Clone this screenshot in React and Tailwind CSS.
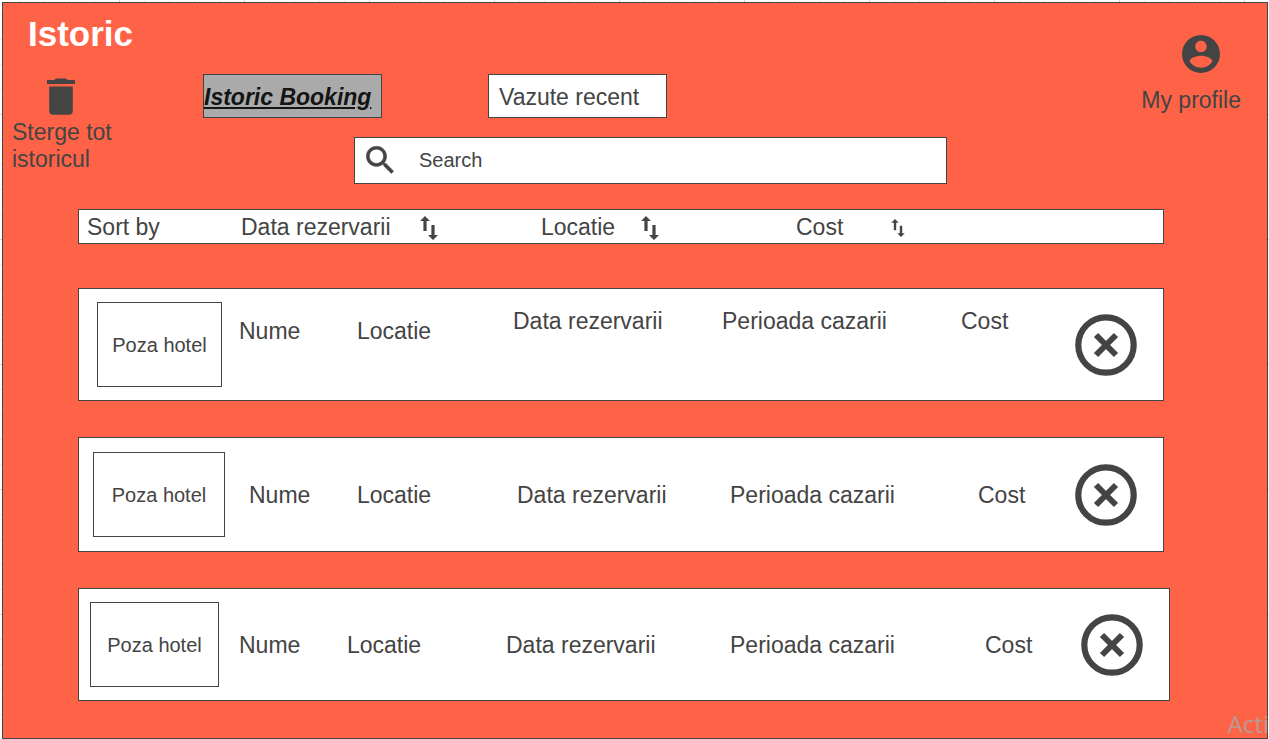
import React from "react";

function TrashIcon() {
  return (
    <svg width="28" height="37" viewBox="0 0 28 37" fill="#444" aria-hidden="true">
      <path d="M0 1.9h7.2Q8 .4 9.5 .4h9Q20 .4 20.8 1.9H28V6H0z" />
      <path d="M2.2 8.4h23.6v24.3a4 4 0 0 1-4 4H6.2a4 4 0 0 1-4-4z" />
    </svg>
  );
}

function ProfileIcon() {
  return (
    <svg width="38" height="38" viewBox="2 2 20 20" fill="#444" aria-hidden="true">
      <path d="M12 2C6.48 2 2 6.48 2 12s4.48 10 10 10 10-4.48 10-10S17.52 2 12 2zm0 3c1.66 0 3 1.34 3 3s-1.34 3-3 3-3-1.34-3-3 1.34-3 3-3zm0 14.2c-2.5 0-4.71-1.28-6-3.22.03-1.99 4-3.08 6-3.08 1.99 0 5.97 1.09 6 3.08-1.29 1.94-3.5 3.22-6 3.22z" />
    </svg>
  );
}

function SearchIcon() {
  return (
    <svg width="28" height="28" viewBox="3.3 3.5 17.9 17.9" fill="#444" stroke="#444" strokeWidth="0.3" className="shrink-0" aria-hidden="true">
      <path d="M15.5 14h-.79l-.28-.27C15.41 12.59 16 11.11 16 9.5 16 5.91 13.09 3 9.5 3S3 5.91 3 9.5 5.91 16 9.5 16c1.61 0 3.09-.59 4.23-1.57l.27.28v.79l5 4.99L20.49 19l-4.99-5zm-6 0C7.01 14 5 11.99 5 9.5S7.01 5 9.5 5 14 7.01 14 9.5 11.99 14 9.5 14z" transform="translate(.5 .6)" />
    </svg>
  );
}

function SortIcon({ className }) {
  return (
    <svg viewBox="0 0 18 24" fill="#444" className={className} aria-hidden="true">
      <path d="M5 0l5 5H6.6V15H3.4V5H0z" />
      <path d="M13 24l-5-5h3.4V9h3.2v10H18z" />
    </svg>
  );
}

function RemoveIcon() {
  return (
    <svg width="62" height="62" viewBox="0 0 62 62" fill="none" stroke="#444" aria-hidden="true">
      <circle cx="31" cy="31" r="27.7" strokeWidth="6.2" />
      <path d="M21 21l20 20M41 21L21 41" strokeWidth="6" />
    </svg>
  );
}

const sortFields = [
  { label: "Data rezervarii", button: "gap-[29px]", icon: "w-[18px] h-6" },
  { label: "Locatie", button: "gap-[26px]", icon: "w-[18px] h-6" },
  { label: "Cost", button: "gap-12", icon: "w-[14px] h-[18px]" },
];

const bookings = [
  {
    id: 1,
    row: "h-[113px] pl-[18px] mr-[103px] grid-cols-[142fr_118fr_156fr_209fr_239fr_114fr_88fr]",
    photo: "w-[125px]",
    name: "self-start pt-[29px]",
    detail: "self-start pt-[19px]",
  },
  {
    id: 2,
    row: "h-[115px] pl-[14px] mr-[103px] grid-cols-[156fr_108fr_160fr_213fr_248fr_97fr_88fr]",
    photo: "w-[132px]",
    name: "pt-0.5",
    detail: "pt-0.5",
  },
  {
    id: 3,
    row: "h-[113px] pl-[11px] mr-[97px] grid-cols-[149fr_108fr_159fr_224fr_255fr_96fr_88fr]",
    photo: "w-[129px]",
    name: "pt-0.5",
    detail: "pt-0.5",
  },
];

function Booking({ row, photo, name, detail }) {
  return (
    <li className={`grid items-center border border-[#444] bg-white whitespace-nowrap ${row}`}>
      <div className={`flex h-[85px] items-center justify-center border border-[#444] text-xl ${photo}`}>
        Poza hotel
      </div>
      <span className={name}>Nume</span>
      <span className={name}>Locatie</span>
      <span className={detail}>Data rezervarii</span>
      <span className={detail}>Perioada cazarii</span>
      <span className={detail}>Cost</span>
      <button type="button" aria-label="Sterge" className="w-[62px]">
        <RemoveIcon />
      </button>
    </li>
  );
}

export default function App() {
  return (
    <div className="relative flex min-h-screen bg-white bg-[linear-gradient(#d4d4d4_1px,transparent_1px),linear-gradient(90deg,#d4d4d4_1px,transparent_1px),linear-gradient(#ececec_1px,transparent_1px),linear-gradient(90deg,#ececec_1px,transparent_1px)] bg-[size:125px_125px,125px_125px,25px_25px,25px_25px] bg-[position:119px_114px] pt-[2px] pr-px pl-[2px] font-['Liberation_Sans',Arial,sans-serif] text-[23px] leading-[27px] text-[#444]">
      <main className="flex-1 border border-[#444] bg-[#ff6347]">
        <header className="flex">
          <div className="w-[200px] shrink-0 pt-[13px] pl-[9px]">
            <h1 className="pl-4 text-[35px] leading-9 font-bold text-white">Istoric</h1>
            <button type="button" className="mt-[26px] block w-[120px] text-left">
              <span className="flex pl-[35px]">
                <TrashIcon />
              </span>
              <span className="mt-1 block">Sterge tot istoricul</span>
            </button>
          </div>

          <div className="flex-1 pt-[71px]">
            <nav className="flex gap-[106px]">
              <a
                href="#booking"
                aria-current="page"
                className="flex h-11 w-[179px] items-center border border-[#444] bg-[#aaa] pt-0.5 font-bold whitespace-nowrap text-[#141414] italic underline"
              >
                Istoric Booking
              </a>
              <a href="#recent" className="flex h-11 w-[179px] items-center border border-[#444] bg-white pt-0.5 pl-[10px]">
                Vazute recent
              </a>
            </nav>
            <label className="mt-[19px] ml-[151px] flex h-[47px] max-w-[593px] items-center gap-[25px] border border-[#444] bg-white pb-px pl-[11px]">
              <SearchIcon />
              <input
                type="search"
                aria-label="Search"
                placeholder="Search"
                className="min-w-0 flex-1 text-xl outline-none placeholder:text-[#444]"
              />
            </label>
          </div>

          <a href="#profile" className="mt-8 mr-[26px] flex flex-col self-start whitespace-nowrap">
            <span className="pl-[41px]">
              <ProfileIcon />
            </span>
            <span className="mt-[14px]">My profile</span>
          </a>
        </header>

        <div className="mt-[25px] mr-[103px] ml-[75px] grid h-[35px] grid-cols-[154fr_300fr_255fr_367fr] items-center border border-[#444] bg-white pt-0.5 pl-2 whitespace-nowrap">
          <span>Sort by</span>
          {sortFields.map((field) => (
            <button key={field.label} type="button" className={`flex items-center ${field.button}`}>
              {field.label}
              <SortIcon className={field.icon} />
            </button>
          ))}
        </div>

        <ul className="mt-11 ml-[75px] flex flex-col gap-9">
          {bookings.map((booking) => (
            <Booking key={booking.id} {...booking} />
          ))}
        </ul>
      </main>

      <div className="pointer-events-none absolute right-0 bottom-0 font-['Open_Sans','Noto_Sans',sans-serif] text-2xl leading-[30px] whitespace-nowrap text-[#b99a90]">
        Acti
      </div>
    </div>
  );
}
